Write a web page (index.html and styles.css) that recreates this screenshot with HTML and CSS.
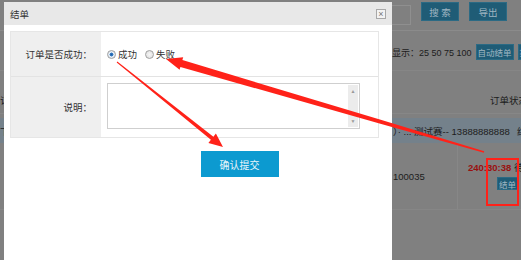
FILE: index.html
```html
<!DOCTYPE html>
<html lang="zh-CN">
<head>
    <meta charset="UTF-8">
    <title>结单</title>
    <link rel="stylesheet" href="styles.css">
</head>
<body>

<div class="page">
    <div class="toolbar">
        <span class="search-box"></span>
        <span class="btn-dark">搜 索</span>
        <span class="btn-dark">导出</span>
    </div>
    <div class="pager">
        <span class="pager-text">每页显示：25 50 75 100</span>
        <span class="btn-dark small">自动结单</span>
        <span class="btn-dark small">批量结单</span>
    </div>
    <div class="grid">
        <div class="grid-head">
            <span class="c1">订单信息</span>
            <span class="c2"></span>
            <span class="c3">订单状态</span>
        </div>
        <div class="grid-group">
            <span class="c1">下单时间：2017-05-02</span>
            <span class="c2">）· ... 测试赛-- 13888888888</span>
            <span class="c3">结</span>
        </div>
        <div class="grid-row">
            <div class="c1"></div>
            <div class="c2">100035</div>
            <div class="c3">
                <div class="timer"><b>240:30:38</b> 待结单</div>
                <span class="btn-dark tiny">结单</span>
            </div>
        </div>
    </div>
</div>

<div class="dialog">
    <div class="dialog-title">
        <span>结单</span>
        <span class="close">&#215;</span>
    </div>
    <div class="dialog-body">
        <div class="form-table">
            <div class="form-label">订单是否成功：</div>
            <div class="form-value">
                <label class="radio"><input type="radio" name="ok" checked> 成功</label>
                <label class="radio"><input type="radio" name="ok"> 失败</label>
            </div>
            <div class="form-label">说明：</div>
            <div class="form-value top">
                <div class="memo">
                    <textarea></textarea>
                    <div class="memo-scroll">
                        <span>&#9650;</span>
                        <span>&#9660;</span>
                    </div>
                </div>
            </div>
        </div>
        <div class="form-actions">
            <button class="btn-submit">确认提交</button>
        </div>
    </div>
</div>

<svg class="marks" width="521" height="260" viewBox="0 0 521 260">
    <!-- arrow to submit button -->
    <polygon points="116.7,62.4 210.9,139.8 208.4,142.9 223,147 215.9,133.6 213.4,136.7 117.3,61.6" />
    <!-- arrow from the red box to "失败" -->
    <polygon points="166,59 183.2,57.3 182.4,60.1 380.7,119.8 484.2,151.3 483.8,152.7 379.5,123.6 180.4,66.9 179.6,69.7" />
    <rect x="487" y="159" width="31" height="46" />
</svg>

</body>
</html>
```

FILE: styles.css
```css
body {
    margin: 0;
    width: 521px;
    height: 260px;
    overflow: hidden;
    position: relative;
    background-color: #808080;
    font-family: "Liberation Sans", "Noto Sans CJK SC", sans-serif;
    font-size: 9.5px;
    color: #1c1c1c;
}

/* page behind the modal, already dimmed */
.page {
    width: 600px;
}
.toolbar {
    display: flex;
    align-items: flex-start;
    height: 30px;
    border-bottom: 1px solid #8b8b8b;
}
.search-box {
    margin: 5px 0 0 300px;
    width: 109px;
    height: 18px;
    border: 1px solid #8f8f8f;
}
.btn-dark {
    display: inline-flex;
    align-items: center;
    justify-content: center;
    white-space: nowrap;
    background-color: #1f5c76;
    color: #9fb6c2;
    border: 1px solid #2b6a84;
    box-sizing: border-box;
}
.toolbar .btn-dark {
    margin: 2px 0 0 10px;
    width: 38px;
    height: 19px;
}
.pager {
    display: flex;
    align-items: center;
    height: 39px;
    padding-left: 374px;
    border-bottom: 1px solid #868686;
}
.pager-text {
    margin-top: 3px;
    white-space: nowrap;
    font-size: 9px;
}
.pager .small {
    flex: none;
    margin: 2px 0 0 4px;
    width: 38px;
    height: 16px;
    font-size: 8.5px;
}
.grid-head,
.grid-group,
.grid-row {
    display: grid;
    grid-template-columns: 392px 66px 1fr;
}
.grid-head {
    height: 43px;
    align-items: end;
    padding-bottom: 6px;
    box-sizing: border-box;
    border-bottom: 1px solid #878787;
}
.grid-head .c3 {
    padding-left: 32px;
    white-space: nowrap;
}
.grid-group {
    margin-top: 4px;
    height: 25px;
    align-items: center;
    background-color: #74818b;
}
.grid-group .c2 {
    white-space: nowrap;
    padding-left: 1px;
}
.grid-group .c3 {
    padding-left: 59px;
}
.grid-row {
    height: 66px;
    border-bottom: 1px solid #868686;
}
.grid-row .c2 {
    display: flex;
    align-items: center;
    padding-left: 1px;
    border-right: 1px solid #878787;
}
.grid-row .c3 {
    padding: 17px 0 0 10px;
}
.timer {
    white-space: nowrap;
}
.timer b {
    color: #9a1010;
}
.grid-row .tiny {
    margin: 3px 0 0 29px;
    width: 21px;
    height: 13px;
    font-size: 8.5px;
}

/* modal */
.dialog {
    position: absolute;
    left: 4px;
    top: 2px;
    width: 388px;
    height: 262px;
    background-color: #fff;
}
.dialog-title {
    height: 23px;
    display: flex;
    align-items: center;
    justify-content: space-between;
    padding: 0 6px;
    background-color: #e8e8e8;
    color: #333;
}
.close {
    width: 8px;
    height: 8px;
    border: 1px solid #a8a8a8;
    background-color: #f3f3f3;
    color: #777;
    font-size: 9px;
    line-height: 8px;
    text-align: center;
}
.dialog-body {
    padding: 6px 6px 0;
}
.form-table {
    display: grid;
    grid-template-columns: 90px 1fr;
    grid-template-rows: 45px 60px;
    width: 369px;
    border: 1px solid #e6e6e6;
    box-sizing: border-box;
    color: #333;
}
.form-label {
    display: flex;
    align-items: center;
    justify-content: flex-end;
    padding-right: 9px;
    background-color: #efefef;
}
.form-label:first-child {
    border-bottom: 1px solid #e3e3e3;
}
.form-value {
    display: flex;
    align-items: center;
    padding-left: 6px;
}
.form-value:nth-child(2) {
    border-bottom: 1px solid #e3e3e3;
}
.form-value.top {
    align-items: flex-start;
    padding-top: 6px;
}
.radio {
    display: flex;
    align-items: center;
    margin-right: 8px;
}
.radio input {
    appearance: none;
    margin: 0 2px 0 0;
    width: 9px;
    height: 9px;
    border: 1px solid #a0a0a0;
    border-radius: 50%;
    background: radial-gradient(circle, #f6f6f6, #dcdcdc);
}
.radio input:checked {
    background: radial-gradient(circle, #1d5fa8 0, #3b7fc4 35%, #e6eef6 45%, #d6dde4 100%);
}
.memo {
    display: flex;
    width: 253px;
    height: 46px;
    border: 1px solid #cfcfcf;
    box-sizing: border-box;
}
.memo textarea {
    flex: 1;
    border: none;
    resize: none;
    outline: none;
}
.memo-scroll {
    width: 10px;
    margin: 1px 1px 1px 0;
    display: flex;
    flex-direction: column;
    justify-content: space-between;
    align-items: center;
    background-color: #ececec;
    color: #999;
    font-size: 5px;
    padding: 3px 0;
}
.form-actions {
    display: flex;
    justify-content: center;
    width: 369px;
    padding-left: 90px;
    box-sizing: border-box;
    margin-top: 13px;
}
.btn-submit {
    width: 78px;
    height: 26px;
    border: none;
    background-color: #0c9ad0;
    color: #e8f5fb;
    font-family: inherit;
    font-size: 10px;
}

/* red annotations over the screenshot */
.marks {
    position: absolute;
    left: 0;
    top: 0;
    pointer-events: none;
}
.marks polygon {
    fill: #ff2219;
}
.marks rect {
    fill: none;
    stroke: #ff2219;
    stroke-width: 2;
}
```
